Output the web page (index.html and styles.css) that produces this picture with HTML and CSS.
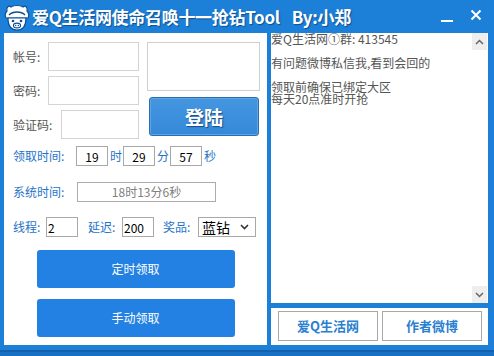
FILE: index.html
```html
<!DOCTYPE html>
<html>
<head>
<meta charset="utf-8">
<link rel="stylesheet" href="styles.css">
</head>
<body>
<div class="win">
  <div class="titlebar">
    <svg class="logo" width="28" height="28" viewBox="0 0 28 28">
      <path d="M4 8 C3 4 6 2 8 4 C11 2 17 2 20 4 C22 2 25 4 24 8 C26 10 26 13 25 15 L3 15 C2 13 2 10 4 8 Z" fill="#fff" stroke="#0d4f95" stroke-width="1.2"/>
      <path d="M6 12 C10 8 18 8 22 12" fill="none" stroke="#0d4f95" stroke-width="1.4"/>
      <path d="M5 15 C5 24 9 27 14 27 C19 27 23 24 23 15 Z" fill="#fff" stroke="#0d4f95" stroke-width="1.2"/>
      <circle cx="10" cy="18" r="1.3" fill="#0d4f95"/>
      <circle cx="18" cy="18" r="1.3" fill="#0d4f95"/>
      <ellipse cx="14" cy="22.5" rx="3.6" ry="2.4" fill="#fff" stroke="#0d4f95" stroke-width="1.1"/>
      <circle cx="12.7" cy="22.5" r="0.7" fill="#0d4f95"/>
      <circle cx="15.3" cy="22.5" r="0.7" fill="#0d4f95"/>
    </svg>
    <div class="title">爱Q生活网使命召唤十一抢钻Tool<span class="by">By:小郑</span></div>
    <svg class="min" width="14" height="14" viewBox="0 0 14 14"><rect x="1" y="8" width="12" height="2" fill="#fff"/></svg>
    <svg class="close" width="12" height="12" viewBox="0 0 12 12"><path d="M1.5 1.5 L10.5 10.5 M10.5 1.5 L1.5 10.5" stroke="#fff" stroke-width="2"/></svg>
  </div>
  <div class="main">
    <div class="left">
      <div class="top">
        <div class="fields">
          <div class="frow"><span class="glabel">帐号:</span><input class="tin w91" type="text"></div>
          <div class="frow"><span class="glabel">密码:</span><input class="tin w91" type="text"></div>
          <div class="frow"><span class="glabel">验证码:</span><input class="tin w78" type="text"></div>
        </div>
        <div class="side">
          <div class="captcha"></div>
          <div class="login">登陆</div>
        </div>
      </div>
      <div class="row time-row">
        <span class="blabel l63">领取时间:</span>
        <input class="sin c" type="text" value="19"><span class="unit">时</span>
        <input class="sin c" type="text" value="29"><span class="unit">分</span>
        <input class="sin c" type="text" value="57"><span class="unit">秒</span>
      </div>
      <div class="row sys-row">
        <span class="blabel l64">系统时间:</span>
        <div class="sysbox">18时13分6秒</div>
      </div>
      <div class="row thr-row">
        <span class="blabel l33">线程:</span>
        <input class="sin" type="text" value="2">
        <span class="blabel l34 ml10">延迟:</span>
        <input class="sin" type="text" value="200">
        <span class="blabel l35 ml9">奖品:</span>
        <div class="select"><span>蓝钻</span>
          <svg width="9" height="6" viewBox="0 0 9 6"><path d="M1 1 L4.5 4.5 L8 1" fill="none" stroke="#333" stroke-width="1.6"/></svg>
        </div>
      </div>
      <div class="btns">
        <div class="bbtn">定时领取</div>
        <div class="bbtn">手动领取</div>
      </div>
    </div>
    <div class="right">
      <div class="log">
        <div class="logtext">爱Q生活网①群: 413545<br><br>有问题微博私信我,看到会回的<br><br>领取前确保已绑定大区<br>每天20点准时开抢</div>
        <div class="sbar">
          <div class="sbtn"><svg width="9" height="6" viewBox="0 0 9 6"><path d="M1 5 L4.5 1.5 L8 5" fill="none" stroke="#666" stroke-width="1.5"/></svg></div>
          <div class="strack"></div>
          <div class="sbtn"><svg width="9" height="6" viewBox="0 0 9 6"><path d="M1 1 L4.5 4.5 L8 1" fill="none" stroke="#666" stroke-width="1.5"/></svg></div>
        </div>
      </div>
      <div class="links">
        <div class="lbtn">爱Q生活网</div>
        <div class="lbtn">作者微博</div>
      </div>
    </div>
  </div>
  <div class="bottom"></div>
</div>
</body>
</html>
```

FILE: styles.css
```css
* { box-sizing: border-box; }
html, body { margin: 0; padding: 0; }
body {
  width: 494px;
  height: 356px;
  background: #1c80d8;
  font-family: "Noto Sans CJK SC", "Noto Sans", sans-serif;
  font-size: 12px;
  overflow: hidden;
}
.win { width: 494px; height: 356px; display: flex; flex-direction: column; }

.titlebar {
  height: 33px;
  display: flex;
  align-items: center;
  color: #fff;
}
.logo { margin-left: 3px; margin-top: 0px; flex: none; }
.title {
  margin-left: 1px;
  font-size: 17px;
  font-weight: bold;
  line-height: 20px;
  letter-spacing: -0.3px;
  text-shadow: 1px 1px 1px rgba(0,40,90,0.55);
  white-space: nowrap;
}
.by { margin-left: 12px; }
.min { margin-left: auto; margin-right: 16px; margin-top: 4px; }
.close { margin-right: 12px; margin-top: -4px; }

.main {
  display: flex;
  gap: 4px;
  padding-left: 4px;
  height: 312px;
}
.left {
  width: 263px;
  height: 312px;
  background: #fff;
  padding: 9px 0 0 9px;
}
.top { display: flex; }
.fields { width: 126px; display: flex; flex-direction: column; gap: 5px; }
.frow {
  height: 29px;
  display: flex;
  align-items: center;
  justify-content: space-between;
}
.glabel { color: #555; font-size: 12px; line-height: 14px; }
.tin {
  height: 29px;
  border: 1px solid #d4d4d4;
  background: #fff;
  margin: 0;
  padding: 0;
  outline: none;
}
.w91 { width: 91px; }
.w78 { width: 78px; }
.side { margin-left: 8px; width: 113px; }
.captcha { width: 113px; height: 49px; border: 1px solid #cfcfcf; }
.login {
  margin: 6px 0 0 2px;
  width: 110px;
  height: 39px;
  background: linear-gradient(#4596e0, #3489d8);
  border: 1px solid #2c6db0;
  border-radius: 3px;
  box-shadow: inset 0 0 0 1px #5ca4e6;
  color: #fff;
  font-size: 19px;
  font-weight: bold;
  line-height: 37px;
  text-align: center;
  text-shadow: 1px 1px 1px rgba(0,30,80,0.6);
}

.row { display: flex; align-items: center; height: 20px; }
.time-row { margin-top: 7px; }
.sys-row { margin-top: 16px; }
.thr-row { margin-top: 15px; }
.blabel { color: #1f74c8; font-size: 12px; line-height: 14px; flex: none; white-space: nowrap; }
.l63 { width: 63px; }
.l64 { width: 64px; }
.l33 { width: 33px; }
.l34 { width: 34px; }
.l35 { width: 35px; }
.ml10 { margin-left: 10px; }
.ml9 { margin-left: 9px; }
.sin {
  width: 32px;
  height: 20px;
  border: 1px solid #a8a8a8;
  margin: 0;
  padding: 0 1px;
  font-family: "Noto Sans CJK SC", "Noto Sans", sans-serif;
  font-size: 12px;
  color: #000;
  outline: none;
  background: #fff;
}
.sin.c { text-align: center; }
.unit { color: #1f74c8; margin: 0 1px 0 2px; line-height: 14px; }
.sysbox {
  width: 139px;
  height: 20px;
  border: 1px solid #acacac;
  color: #808080;
  text-align: center;
  line-height: 18px;
  font-size: 12px;
}
.select {
  width: 58px;
  height: 20px;
  border: 1px solid #a8a8a8;
  display: flex;
  align-items: center;
  justify-content: space-between;
  padding: 0 6px 0 3px;
  font-size: 14px;
  color: #000;
  line-height: 18px;
}
.btns {
  margin-top: 13px;
  display: flex;
  flex-direction: column;
  align-items: center;
  gap: 11px;
  margin-left: -9px;
}
.bbtn {
  width: 198px;
  height: 38px;
  background: #2281e2;
  border-radius: 3px;
  color: #fff;
  text-align: center;
  line-height: 38px;
  font-size: 12px;
}

.right { width: 217px; display: flex; flex-direction: column; gap: 5px; }
.log {
  height: 270px;
  background: #fff;
  display: flex;
}
.logtext {
  flex: 1;
  color: #555;
  font-size: 12px;
  line-height: 12px;
  padding-top: 0;
  white-space: nowrap;
}
.sbar { width: 15px; display: flex; flex-direction: column; margin-right: 1px; }
.sbtn {
  height: 17px;
  background: #eeeeee;
  display: flex;
  align-items: center;
  justify-content: center;
}
.strack { flex: 1; background: #fff; }
.links {
  height: 37px;
  background: #fff;
  display: flex;
  gap: 4px;
  padding: 3px 0 0 7px;
}
.lbtn {
  width: 100px;
  height: 30px;
  border: 1px solid #a9a9a9;
  color: #2b7fd0;
  font-weight: bold;
  font-size: 13px;
  text-align: center;
  line-height: 28px;
}
.bottom {
  height: 11px;
  background: linear-gradient(#1c80d8 0 5px, #1560ab 5px 7px, #1870c4 7px);
}
```
